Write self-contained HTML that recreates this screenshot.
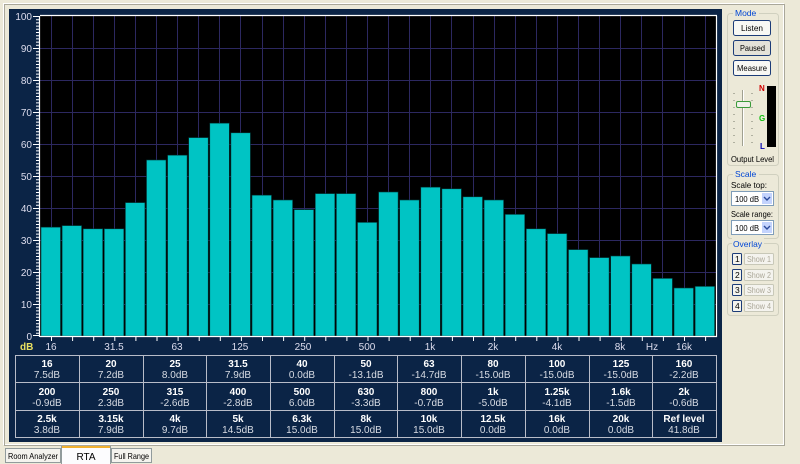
<!DOCTYPE html>
<html><head><meta charset="utf-8"><style>
html,body{margin:0;padding:0;background:#ece9d8;}
svg{display:block;font-family:"Liberation Sans",sans-serif;}
</style></head><body>
<svg width="800" height="464" viewBox="0 0 800 464" xmlns="http://www.w3.org/2000/svg">
<rect width="800" height="464" fill="#ece9d8"/>
<rect x="3.5" y="3.5" width="780" height="441" fill="none" stroke="#ffffff"/>
<rect x="4.5" y="4.5" width="780" height="441" fill="none" stroke="#a9a79a"/>
<rect x="9" y="9" width="713" height="433" fill="#0b2446"/>
<rect x="40" y="16" width="677" height="320" fill="#000"/>
<g stroke="#2c2860" stroke-width="1">
<line x1="40" y1="48.5" x2="717" y2="48.5"/><line x1="40" y1="80.5" x2="717" y2="80.5"/><line x1="40" y1="112.5" x2="717" y2="112.5"/><line x1="40" y1="144.5" x2="717" y2="144.5"/><line x1="40" y1="176.5" x2="717" y2="176.5"/><line x1="40" y1="208.5" x2="717" y2="208.5"/><line x1="40" y1="240.5" x2="717" y2="240.5"/><line x1="40" y1="272.5" x2="717" y2="272.5"/><line x1="40" y1="304.5" x2="717" y2="304.5"/>
<line x1="51.5" y1="16" x2="51.5" y2="336"/><line x1="72.5" y1="16" x2="72.5" y2="336"/><line x1="93.5" y1="16" x2="93.5" y2="336"/><line x1="114.5" y1="16" x2="114.5" y2="336"/><line x1="135.5" y1="16" x2="135.5" y2="336"/><line x1="156.5" y1="16" x2="156.5" y2="336"/><line x1="177.5" y1="16" x2="177.5" y2="336"/><line x1="198.5" y1="16" x2="198.5" y2="336"/><line x1="219.5" y1="16" x2="219.5" y2="336"/><line x1="240.5" y1="16" x2="240.5" y2="336"/><line x1="262.5" y1="16" x2="262.5" y2="336"/><line x1="283.5" y1="16" x2="283.5" y2="336"/><line x1="304.5" y1="16" x2="304.5" y2="336"/><line x1="325.5" y1="16" x2="325.5" y2="336"/><line x1="346.5" y1="16" x2="346.5" y2="336"/><line x1="367.5" y1="16" x2="367.5" y2="336"/><line x1="388.5" y1="16" x2="388.5" y2="336"/><line x1="409.5" y1="16" x2="409.5" y2="336"/><line x1="430.5" y1="16" x2="430.5" y2="336"/><line x1="451.5" y1="16" x2="451.5" y2="336"/><line x1="473.5" y1="16" x2="473.5" y2="336"/><line x1="494.5" y1="16" x2="494.5" y2="336"/><line x1="515.5" y1="16" x2="515.5" y2="336"/><line x1="536.5" y1="16" x2="536.5" y2="336"/><line x1="557.5" y1="16" x2="557.5" y2="336"/><line x1="578.5" y1="16" x2="578.5" y2="336"/><line x1="599.5" y1="16" x2="599.5" y2="336"/><line x1="620.5" y1="16" x2="620.5" y2="336"/><line x1="641.5" y1="16" x2="641.5" y2="336"/><line x1="662.5" y1="16" x2="662.5" y2="336"/><line x1="684.5" y1="16" x2="684.5" y2="336"/><line x1="705.5" y1="16" x2="705.5" y2="336"/>
</g>
<g fill="#00c4c4" stroke="#003a3a" stroke-width="0.6">
<rect x="41" y="227.2" width="19.5" height="108.8"/>
<rect x="62.1" y="225.6" width="19.5" height="110.4"/>
<rect x="83.2" y="228.8" width="19.5" height="107.2"/>
<rect x="104.3" y="228.8" width="19.5" height="107.2"/>
<rect x="125.4" y="202.6" width="19.5" height="133.4"/>
<rect x="146.5" y="160" width="19.5" height="176"/>
<rect x="167.6" y="155.2" width="19.5" height="180.8"/>
<rect x="188.7" y="137.6" width="19.5" height="198.4"/>
<rect x="209.8" y="123.2" width="19.5" height="212.8"/>
<rect x="230.9" y="132.8" width="19.5" height="203.2"/>
<rect x="252" y="195.2" width="19.5" height="140.8"/>
<rect x="273.1" y="200" width="19.5" height="136"/>
<rect x="294.2" y="209.6" width="19.5" height="126.4"/>
<rect x="315.3" y="193.6" width="19.5" height="142.4"/>
<rect x="336.4" y="193.6" width="19.5" height="142.4"/>
<rect x="357.5" y="222.4" width="19.5" height="113.6"/>
<rect x="378.6" y="192" width="19.5" height="144"/>
<rect x="399.7" y="200" width="19.5" height="136"/>
<rect x="420.8" y="187.2" width="19.5" height="148.8"/>
<rect x="441.9" y="188.8" width="19.5" height="147.2"/>
<rect x="463" y="196.8" width="19.5" height="139.2"/>
<rect x="484.1" y="200" width="19.5" height="136"/>
<rect x="505.2" y="214.4" width="19.5" height="121.6"/>
<rect x="526.3" y="228.8" width="19.5" height="107.2"/>
<rect x="547.4" y="233.6" width="19.5" height="102.4"/>
<rect x="568.5" y="249.6" width="19.5" height="86.4"/>
<rect x="589.6" y="257.6" width="19.5" height="78.4"/>
<rect x="610.7" y="256" width="19.5" height="80"/>
<rect x="631.8" y="264" width="19.5" height="72"/>
<rect x="652.9" y="278.4" width="19.5" height="57.6"/>
<rect x="674" y="288" width="19.5" height="48"/>
<rect x="695.1" y="286.4" width="19.5" height="49.6"/>
</g>
<g stroke="#fff" stroke-width="1.2">
<line x1="40" y1="15.5" x2="717" y2="15.5"/>
<line x1="39.5" y1="16" x2="39.5" y2="337"/>
<line x1="40" y1="336.5" x2="717" y2="336.5"/>
<line x1="716.5" y1="16" x2="716.5" y2="337"/>
</g>
<line x1="37.5" y1="16" x2="37.5" y2="336" stroke="#fff" stroke-width="3" stroke-dasharray="1 2.2"/>
<g stroke="#fff"><line x1="33" y1="16.5" x2="40" y2="16.5"/><line x1="33" y1="48.5" x2="40" y2="48.5"/><line x1="33" y1="80.5" x2="40" y2="80.5"/><line x1="33" y1="112.5" x2="40" y2="112.5"/><line x1="33" y1="144.5" x2="40" y2="144.5"/><line x1="33" y1="176.5" x2="40" y2="176.5"/><line x1="33" y1="208.5" x2="40" y2="208.5"/><line x1="33" y1="240.5" x2="40" y2="240.5"/><line x1="33" y1="272.5" x2="40" y2="272.5"/><line x1="33" y1="304.5" x2="40" y2="304.5"/><line x1="33" y1="335.5" x2="40" y2="335.5"/></g>
<g fill="#dde" font-size="10" text-anchor="end">
<text x="32" y="20">100</text><text x="32" y="52">90</text><text x="32" y="84">80</text><text x="32" y="116">70</text><text x="32" y="148">60</text><text x="32" y="180">50</text><text x="32" y="212">40</text><text x="32" y="244">30</text><text x="32" y="276">20</text><text x="32" y="308">10</text><text x="32" y="340">0</text>
</g>
<line x1="40" y1="339" x2="717" y2="339" stroke="#fff" stroke-width="4" stroke-dasharray="1 20.1" stroke-dashoffset="-11"/>
<text x="20" y="350" fill="#e8e060" font-size="10" font-weight="bold">dB</text>
<g fill="#dde" font-size="10" text-anchor="middle">
<text x="51" y="350">16</text><text x="114" y="350">31.5</text><text x="177" y="350">63</text><text x="240" y="350">125</text><text x="303" y="350">250</text><text x="367" y="350">500</text><text x="430" y="350">1k</text><text x="493" y="350">2k</text><text x="557" y="350">4k</text><text x="620" y="350">8k</text><text x="652" y="350">Hz</text><text x="684" y="350">16k</text>
</g>
<g stroke="#b8bcc8" stroke-width="1" fill="none">
<rect x="15.5" y="355.5" width="701" height="82"/>
<line x1="15" y1="382.5" x2="717" y2="382.5"/><line x1="15" y1="410.5" x2="717" y2="410.5"/>
<line x1="79.5" y1="355" x2="79.5" y2="438"/><line x1="143.5" y1="355" x2="143.5" y2="438"/><line x1="206.5" y1="355" x2="206.5" y2="438"/><line x1="270.5" y1="355" x2="270.5" y2="438"/><line x1="334.5" y1="355" x2="334.5" y2="438"/><line x1="397.5" y1="355" x2="397.5" y2="438"/><line x1="461.5" y1="355" x2="461.5" y2="438"/><line x1="525.5" y1="355" x2="525.5" y2="438"/><line x1="589.5" y1="355" x2="589.5" y2="438"/><line x1="652.5" y1="355" x2="652.5" y2="438"/>
</g>
<g fill="#fff" font-size="10" font-weight="bold" text-anchor="middle">
<text x="47" y="367">16</text><text x="111" y="367">20</text><text x="175" y="367">25</text><text x="238" y="367">31.5</text><text x="302" y="367">40</text><text x="366" y="367">50</text><text x="429" y="367">63</text><text x="493" y="367">80</text><text x="557" y="367">100</text><text x="621" y="367">125</text><text x="684" y="367">160</text>
<text x="47" y="395">200</text><text x="111" y="395">250</text><text x="175" y="395">315</text><text x="238" y="395">400</text><text x="302" y="395">500</text><text x="366" y="395">630</text><text x="429" y="395">800</text><text x="493" y="395">1k</text><text x="557" y="395">1.25k</text><text x="621" y="395">1.6k</text><text x="684" y="395">2k</text>
<text x="47" y="422">2.5k</text><text x="111" y="422">3.15k</text><text x="175" y="422">4k</text><text x="238" y="422">5k</text><text x="302" y="422">6.3k</text><text x="366" y="422">8k</text><text x="429" y="422">10k</text><text x="493" y="422">12.5k</text><text x="557" y="422">16k</text><text x="621" y="422">20k</text><text x="684" y="422">Ref level</text>
</g>
<g fill="#d8dce4" font-size="10" text-anchor="middle">
<text x="47" y="378">7.5dB</text><text x="111" y="378">7.2dB</text><text x="175" y="378">8.0dB</text><text x="238" y="378">7.9dB</text><text x="302" y="378">0.0dB</text><text x="366" y="378">-13.1dB</text><text x="429" y="378">-14.7dB</text><text x="493" y="378">-15.0dB</text><text x="557" y="378">-15.0dB</text><text x="621" y="378">-15.0dB</text><text x="684" y="378">-2.2dB</text>
<text x="47" y="406">-0.9dB</text><text x="111" y="406">2.3dB</text><text x="175" y="406">-2.6dB</text><text x="238" y="406">-2.8dB</text><text x="302" y="406">6.0dB</text><text x="366" y="406">-3.3dB</text><text x="429" y="406">-0.7dB</text><text x="493" y="406">-5.0dB</text><text x="557" y="406">-4.1dB</text><text x="621" y="406">-1.5dB</text><text x="684" y="406">-0.6dB</text>
<text x="47" y="433">3.8dB</text><text x="111" y="433">7.9dB</text><text x="175" y="433">9.7dB</text><text x="238" y="433">14.5dB</text><text x="302" y="433">15.0dB</text><text x="366" y="433">15.0dB</text><text x="429" y="433">15.0dB</text><text x="493" y="433">0.0dB</text><text x="557" y="433">0.0dB</text><text x="621" y="433">0.0dB</text><text x="684" y="433">41.8dB</text>
</g>
<!-- right panel -->
<g fill="none" stroke="#d0d0bf">
<rect x="727.5" y="13.5" width="51" height="152" rx="3"/>
<rect x="727.5" y="174.5" width="51" height="64" rx="3"/>
<rect x="727.5" y="243.5" width="51" height="72" rx="3"/>
</g>
<g font-size="8.5" fill="#0046d5">
<rect x="733" y="8" width="26" height="10" fill="#ece9d8"/><text x="735" y="16">Mode</text>
<rect x="733" y="169" width="26" height="10" fill="#ece9d8"/><text x="735" y="177">Scale</text>
<rect x="732" y="238" width="32" height="10" fill="#ece9d8"/><text x="733" y="247" textLength="29" lengthAdjust="spacingAndGlyphs">Overlay</text>
</g>
<g font-size="8.5" fill="#000">
<rect x="733.5" y="20.5" width="37" height="15" rx="2" fill="#f8f8f4" stroke="#1c3c78"/><text x="741" y="31" textLength="22" lengthAdjust="spacingAndGlyphs">Listen</text>
<rect x="733.5" y="40.5" width="37" height="15" rx="2" fill="#e4e2d8" stroke="#1c3c78"/><text x="740" y="51" textLength="25" lengthAdjust="spacingAndGlyphs">Paused</text>
<rect x="733.5" y="60.5" width="37" height="15" rx="2" fill="#f8f8f4" stroke="#1c3c78"/><text x="737" y="71" textLength="30" lengthAdjust="spacingAndGlyphs">Measure</text>
</g>
<line x1="742.5" y1="90" x2="742.5" y2="146" stroke="#a0a090"/>
<line x1="743.5" y1="90" x2="743.5" y2="146" stroke="#fff"/>
<g stroke="#b0b0a0"><line x1="733" y1="93.5" x2="735" y2="93.5"/><line x1="733" y1="100.5" x2="735" y2="100.5"/><line x1="733" y1="107.5" x2="735" y2="107.5"/><line x1="733" y1="114.5" x2="735" y2="114.5"/><line x1="733" y1="121.5" x2="735" y2="121.5"/><line x1="733" y1="128.5" x2="735" y2="128.5"/><line x1="733" y1="135.5" x2="735" y2="135.5"/><line x1="733" y1="142.5" x2="735" y2="142.5"/><line x1="751" y1="93.5" x2="753" y2="93.5"/><line x1="751" y1="100.5" x2="753" y2="100.5"/><line x1="751" y1="107.5" x2="753" y2="107.5"/><line x1="751" y1="114.5" x2="753" y2="114.5"/><line x1="751" y1="121.5" x2="753" y2="121.5"/><line x1="751" y1="128.5" x2="753" y2="128.5"/><line x1="751" y1="135.5" x2="753" y2="135.5"/><line x1="751" y1="142.5" x2="753" y2="142.5"/></g>
<rect x="736.5" y="101.5" width="14" height="6" rx="1.5" fill="#f0f0ea" stroke="#3a9a3a"/>
<rect x="767" y="86" width="9" height="61" fill="#000"/>
<text x="759" y="91" font-size="8" font-weight="bold" fill="#d00000">N</text>
<text x="759" y="121" font-size="8" font-weight="bold" fill="#10c010">G</text>
<text x="760" y="149" font-size="8" font-weight="bold" fill="#0000b0">L</text>
<text x="731" y="162" font-size="8.5" fill="#000" textLength="43" lengthAdjust="spacingAndGlyphs">Output Level</text>
<text x="731" y="188" font-size="8.5" fill="#000" textLength="36" lengthAdjust="spacingAndGlyphs">Scale top:</text>
<rect x="731.5" y="191.5" width="42" height="14" fill="#fff" stroke="#7f9db9"/>
<text x="735" y="202" font-size="8.5" textLength="24" lengthAdjust="spacingAndGlyphs">100 dB</text>
<rect x="762" y="193" width="10" height="11" fill="#c3d3fd"/><path d="M764 197 l3 3 l3 -3" stroke="#2a4a9a" stroke-width="1.4" fill="none"/>
<text x="731" y="217" font-size="8.5" fill="#000" textLength="42" lengthAdjust="spacingAndGlyphs">Scale range:</text>
<rect x="731.5" y="220.5" width="42" height="14" fill="#fff" stroke="#7f9db9"/>
<text x="735" y="231" font-size="8.5" textLength="24" lengthAdjust="spacingAndGlyphs">100 dB</text>
<rect x="762" y="222" width="10" height="11" fill="#c3d3fd"/><path d="M764 226 l3 3 l3 -3" stroke="#2a4a9a" stroke-width="1.4" fill="none"/>
<g font-size="8.5">
<rect x="732.5" y="253.5" width="9" height="11" rx="1" fill="#f4f4ee" stroke="#1c3c78"/><text x="735" y="262">1</text>
<rect x="744.5" y="253.5" width="29" height="11" rx="1" fill="#f4f3ee" stroke="#c8c8b8"/><text x="747" y="262" fill="#aca899" textLength="24" lengthAdjust="spacingAndGlyphs">Show 1</text>
<rect x="732.5" y="269.5" width="9" height="11" rx="1" fill="#f4f4ee" stroke="#1c3c78"/><text x="735" y="278">2</text>
<rect x="744.5" y="269.5" width="29" height="11" rx="1" fill="#f4f3ee" stroke="#c8c8b8"/><text x="747" y="278" fill="#aca899" textLength="24" lengthAdjust="spacingAndGlyphs">Show 2</text>
<rect x="732.5" y="284.5" width="9" height="11" rx="1" fill="#f4f4ee" stroke="#1c3c78"/><text x="735" y="293">3</text>
<rect x="744.5" y="284.5" width="29" height="11" rx="1" fill="#f4f3ee" stroke="#c8c8b8"/><text x="747" y="293" fill="#aca899" textLength="24" lengthAdjust="spacingAndGlyphs">Show 3</text>
<rect x="732.5" y="300.5" width="9" height="11" rx="1" fill="#f4f4ee" stroke="#1c3c78"/><text x="735" y="309">4</text>
<rect x="744.5" y="300.5" width="29" height="11" rx="1" fill="#f4f3ee" stroke="#c8c8b8"/><text x="747" y="309" fill="#aca899" textLength="24" lengthAdjust="spacingAndGlyphs">Show 4</text>
</g>
<rect x="5.5" y="448.5" width="55" height="14" fill="#f4f3ee" stroke="#919b9c"/>
<text x="8" y="459" font-size="8.5" textLength="50" lengthAdjust="spacingAndGlyphs">Room Analyzer</text>
<rect x="61" y="446" width="50" height="18" fill="#fcfcfe"/>
<rect x="61" y="446" width="50" height="2" fill="#f0b030"/>
<line x1="61.5" y1="446" x2="61.5" y2="464" stroke="#919b9c"/><line x1="110.5" y1="446" x2="110.5" y2="464" stroke="#919b9c"/>
<text x="86" y="460" font-size="10" text-anchor="middle">RTA</text>
<rect x="111.5" y="448.5" width="40" height="14" fill="#f4f3ee" stroke="#919b9c"/>
<text x="114" y="459" font-size="8.5" textLength="35" lengthAdjust="spacingAndGlyphs">Full Range</text>
</svg>
</body></html>
